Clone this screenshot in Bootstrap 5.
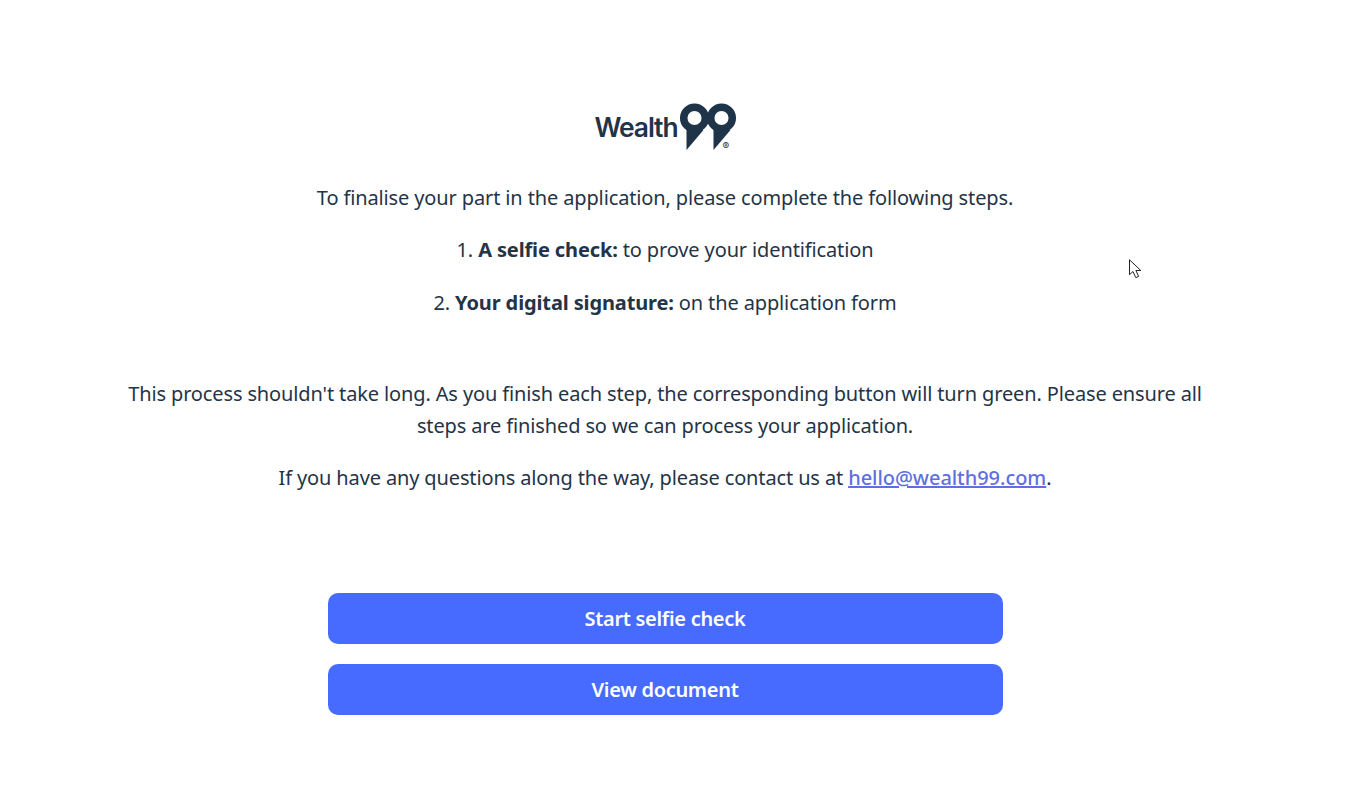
<!DOCTYPE html>
<html lang="en">
<head>
<meta charset="utf-8">
<title>Wealth99</title>
<link href="https://cdn.jsdelivr.net/npm/bootstrap@5.3.0/dist/css/bootstrap.min.css" rel="stylesheet">
<style>
html, body { height: 100%; overflow: hidden; }
body { background: #fff; color: #243447; font-family: "Noto Sans", "Open Sans", sans-serif; font-size: 20px; line-height: 32px; }
.page-wrap { padding-right: 18px; padding-top: 103px; }
.brand-logo { height: 47px; margin-bottom: 31px; color: #1f3349; gap: 2px; }
.brand-word { font-family: Inter, sans-serif; font-weight: 600; font-size: 26.400px; line-height: 1; letter-spacing: -1.050px; margin-top: 2px; }
.brand-mark { width: 56px; height: 47px; display: block; overflow: visible; }
.brand-reg { font-family: Inter, sans-serif; font-size: 10px; }
.copy-text { padding-top: 1px; }
.copy-text p { margin-bottom: 20.400px; letter-spacing: -0.130px; }
.copy-text .gap-before { margin-top: 59px; }
.copy-text a { color: #5f6fe0; font-weight: 500; letter-spacing: -0.050px; }
.copy-text strong { font-weight: 700; }
.action-stack { width: 675px; margin-top: 99px; gap: 20px; }
.action-btn { background: #476bff; border: 0; border-radius: 10px; color: #fff; height: 51px; font-size: 20px; font-weight: 600; letter-spacing: -0.300px; padding: 1px 0 0; }
.action-btn:hover { background: #476bff; color: #fff; }
.pointer-mark { position: absolute; left: 1129px; top: 259px; width: 13px; height: 20px; }
</style>
</head>
<body>
<div class="page-wrap">
  <div class="container text-center">
    <div class="brand-logo d-flex justify-content-center align-items-center">
      <span class="brand-word">Wealth</span>
      <svg class="brand-mark" viewBox="0 0 56 47" aria-hidden="true">
        <g fill="none" stroke="currentColor" stroke-width="7.500">
          <circle cx="14.500" cy="15" r="10.800"/>
          <circle cx="41.500" cy="15" r="10.800"/>
        </g>
        <g fill="currentColor">
          <polygon points="6.500,24 6.500,47 23.500,27"/>
          <polygon points="33.500,24 33.500,47 50.500,27"/>
        </g>
        <text class="brand-reg" x="42.500" y="46.500" fill="currentColor">®</text>
      </svg>
    </div>
    <div class="copy-text">
      <p>To finalise your part in the application, please complete the following steps.</p>
      <p>1. <strong>A selfie check:</strong> to prove your identification</p>
      <p>2. <strong>Your digital signature:</strong> on the application form</p>
      <p class="gap-before">This process shouldn't take long. As you finish each step, the corresponding button will turn green. Please ensure all steps are finished so we can process your application.</p>
      <p>If you have any questions along the way, please contact us at <a href="#">hello@wealth99.com</a>.</p>
    </div>
    <div class="action-stack d-flex flex-column mx-auto">
      <button type="button" class="btn action-btn">Start selfie check</button>
      <button type="button" class="btn action-btn">View document</button>
    </div>
  </div>
</div>
<svg class="pointer-mark" viewBox="0 0 13 20" aria-hidden="true">
  <path d="M.5.800V15.700L4 12.500 6.800 18.700 9.600 17.400 6.900 11.500H11.800Z" fill="#fff" stroke="#222" stroke-width="1"/>
</svg>
<script src="https://cdn.jsdelivr.net/npm/bootstrap@5.3.0/dist/js/bootstrap.bundle.min.js"></script>
</body>
</html>
